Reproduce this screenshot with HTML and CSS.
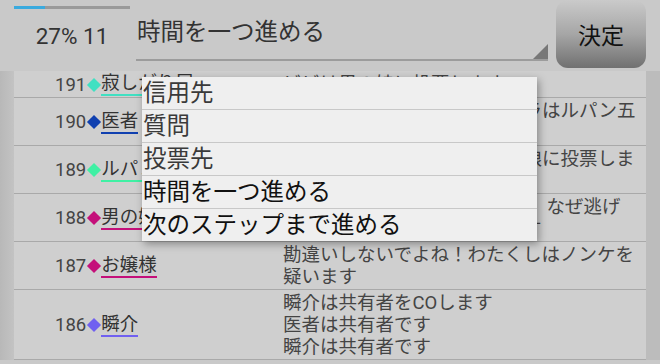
FILE: index.html
```html
<!DOCTYPE html>
<html lang="ja">
<head>
    <meta charset="UTF-8">
    <meta name="viewport" content="width=device-width, initial-scale=1.0">
    <title>進行</title>
    <link rel="stylesheet" href="styles.css">
</head>
<body>
    <div class="header">
        <div class="status">
            <div class="progress"><div class="progress-fill" style="width: 27%"></div></div>
            <div class="status-text">27% 11</div>
        </div>
        <div class="select">
            <span class="select-text">時間を一つ進める</span>
            <span class="select-arrow"></span>
        </div>
        <button class="decide">決定</button>
    </div>

    <div class="list-wrap">
        <div class="list">
            <div class="row">
                <div class="who"><span class="num">191</span><span class="gem c-teal"></span><span class="name c-teal">寂しがり屋</span></div>
                <div class="msg">ビビは男の娘に投票します</div>
            </div>
            <div class="row">
                <div class="who"><span class="num">190</span><span class="gem c-blue"></span><span class="name c-blue">医者</span></div>
                <div class="msg">占いの結果、昨晩のシャンドラはルパン五世でした</div>
            </div>
            <div class="row">
                <div class="who"><span class="num">189</span><span class="gem c-mint"></span><span class="name c-mint">ルパン五世</span></div>
                <div class="msg">僕は今夜の処刑で迷わず男の娘に投票します</div>
            </div>
            <div class="row">
                <div class="who"><span class="num">188</span><span class="gem c-pink"></span><span class="name c-pink">男の娘</span></div>
                <div class="msg">男の娘だけど狼じゃないもん、 なぜ逃げる必要があるのか知りたいです</div>
            </div>
            <div class="row">
                <div class="who"><span class="num">187</span><span class="gem c-pink"></span><span class="name c-pink">お嬢様</span></div>
                <div class="msg">勘違いしないでよね！わたくしはノンケを疑います</div>
            </div>
            <div class="row">
                <div class="who"><span class="num">186</span><span class="gem c-violet"></span><span class="name c-violet">瞬介</span></div>
                <div class="msg">瞬介は共有者をCOします<br>医者は共有者です<br>瞬介は共有者です</div>
            </div>
        </div>
    </div>

    <ul class="menu">
        <li class="menu-item dim">信用先</li>
        <li class="menu-item dim">質問</li>
        <li class="menu-item dim">投票先</li>
        <li class="menu-item">時間を一つ進める</li>
        <li class="menu-item">次のステップまで進める</li>
    </ul>
</body>
</html>
```

FILE: styles.css
```css
body {
    margin: 0;
    height: 364px;
    overflow: hidden;
    font-family: Roboto, "Noto Sans CJK JP", sans-serif;
    background-color: #c9c9c9;
    color: #333;
}

.header {
    display: flex;
    height: 71px;
    padding: 0 14px;
}

.status {
    width: 116px;
    margin-right: 6px;
}

.progress {
    height: 3px;
    margin-top: 6px;
    background-color: #9a9a9a;
}

.progress-fill {
    height: 100%;
    background-color: #3aaade;
}

.status-text {
    margin-top: 14px;
    font-size: 22.5px;
    line-height: 26px;
    text-align: center;
    color: #333;
}

.select {
    position: relative;
    width: 412px;
    height: 59px;
    border-bottom: 2px solid #9c9c9c;
}

.select-text {
    display: block;
    padding: 17px 0 0 1px;
    font-size: 23.5px;
    line-height: 30px;
    color: #333;
}

.select-arrow {
    position: absolute;
    right: 0;
    bottom: 0;
    width: 15px;
    height: 15px;
    background-color: #777;
    clip-path: polygon(100% 0, 100% 100%, 0 100%);
}

.decide {
    width: 90px;
    height: 68px;
    margin-left: 8px;
    padding: 0;
    border: none;
    border-radius: 12px;
    background: linear-gradient(#cacaca, #a6a6a6 50%, #707070);
    font-family: Roboto, "Noto Sans CJK JP", sans-serif;
    font-size: 23px;
    color: #111;
}

.list-wrap {
    padding: 0 14px;
    background: linear-gradient(to right, #b8b8b8, #c3c3c3 14px, #c3c3c3 calc(100% - 14px), #bcbcbc calc(100% - 14px));
}

.list {
    background-color: #cfcfcf;
}

.row {
    display: grid;
    grid-template-columns: 269px 1fr;
    padding: 2px 0 1px;
    border-bottom: 1px solid #a9a9a9;
}

.who {
    display: flex;
    align-items: center;
    padding-left: 41px;
    font-size: 18.5px;
}

.num {
    color: #444;
}

.gem {
    display: inline-block;
    width: 10px;
    height: 10px;
    margin: 0 2px 0 3px;
    transform: rotate(45deg);
    background-color: currentColor;
}

.name {
    display: inline-block;
    line-height: 21px;
    border-bottom: 2px solid currentColor;
    -webkit-text-fill-color: #333;
}

.msg {
    padding-right: 8px;
    font-size: 18.5px;
    line-height: 22px;
    color: #444;
}

.c-teal { color: #40e0c2; }
.c-blue { color: #1040b0; }
.c-mint { color: #40f0a4; }
.c-pink { color: #c4107a; }
.c-violet { color: #7060f0; }

.menu {
    position: absolute;
    left: 142px;
    top: 77px;
    width: 395px;
    margin: 0;
    padding: 0;
    list-style: none;
    background-color: #efefef;
    box-shadow: 2px 3px 8px rgba(0, 0, 0, 0.35);
}

.menu-item {
    height: 32px;
    padding-left: 1px;
    font-size: 23.5px;
    line-height: 32px;
    color: #111;
    border-top: 1px solid #c8c8c8;
}

.menu-item:first-child {
    border-top: none;
}

.menu-item.dim {
    color: #3a3a3a;
}
```
